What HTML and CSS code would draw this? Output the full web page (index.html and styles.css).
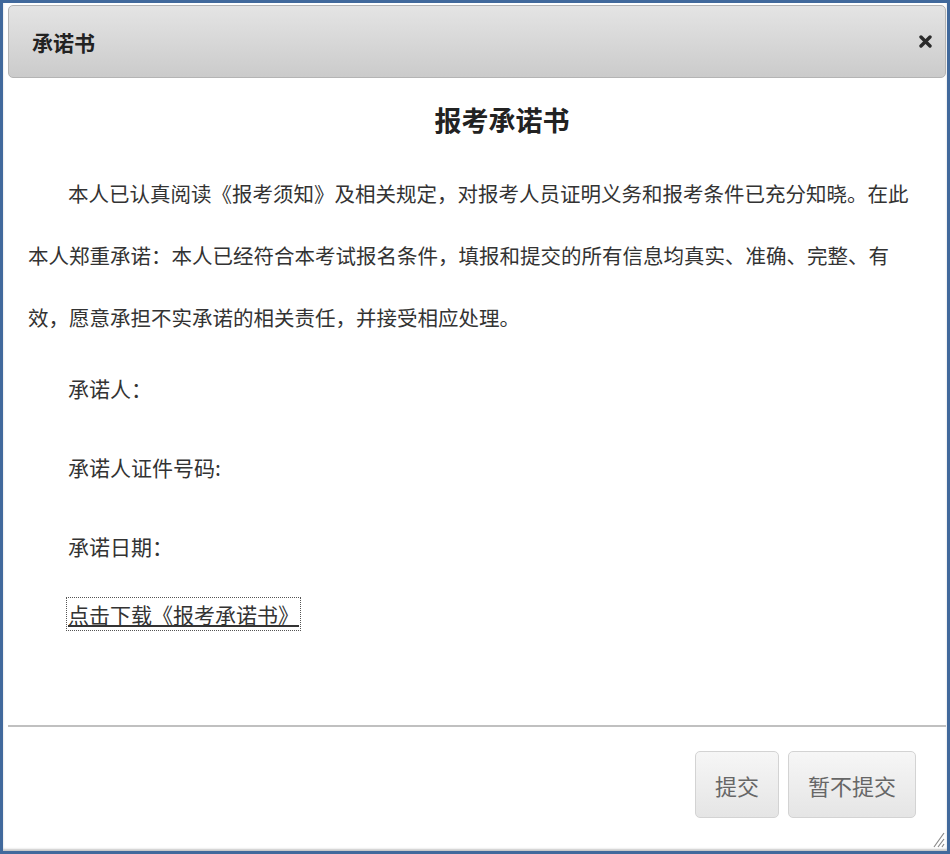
FILE: index.html
```html
<!DOCTYPE html>
<html lang="zh-CN">
<head>
  <meta charset="UTF-8" />
  <title>承诺书</title>
  <link rel="stylesheet" href="styles.css">
</head>
<body>
  <div class="window">
    <div class="titlebar">
      <span class="title">承诺书</span>
      <a class="close" href="#" title="关闭">
        <svg width="13" height="13" viewBox="0 0 13 13"><path d="M2 2 L11 11 M11 2 L2 11" stroke="#2b2b2b" stroke-width="3.4" stroke-linecap="round"/></svg>
      </a>
    </div>

    <div class="content">
      <h2>报考承诺书</h2>
      <p class="para">本人已认真阅读《报考须知》及相关规定，对报考人员证明义务和报考条件已充分知晓。在此本人郑重承诺：本人已经符合本考试报名条件，填报和提交的所有信息均真实、准确、完整、有效，愿意承担不实承诺的相关责任，并接受相应处理。</p>
      <p class="item first">承诺人：</p>
      <p class="item">承诺人证件号码:</p>
      <p class="item">承诺日期：</p>
      <p class="item download"><a href="#">点击下载《报考承诺书》</a></p>
    </div>

    <div class="footer">
      <button class="btn">提交</button>
      <button class="btn">暂不提交</button>
      <svg class="grip" width="12" height="18" viewBox="0 0 12 18">
        <path d="M1 17 L11 3 M5 17 L11 9 M9 17 L11 14" stroke="#8a8a8a" stroke-width="1.2"/>
      </svg>
    </div>
  </div>
</body>
</html>
```

FILE: styles.css
```css
* {
  box-sizing: border-box;
}
body {
  margin: 0;
  font-family: "Noto Sans CJK SC", "Liberation Sans", sans-serif;
  color: #333;
  background: #fff;
}
.window {
  width: 950px;
  height: 854px;
  border: 3px solid #41699c;
  background: #fff;
  display: flex;
  flex-direction: column;
  position: relative;
  box-shadow: inset 0 -2px 2px #c8c8c8;
}
.titlebar {
  height: 73px;
  margin: 2px 1px 0 5px;
  border: 1px solid #b4b4b4;
  border-radius: 5px;
  background: linear-gradient(#e4e4e4, #cbcbcb);
  display: flex;
  align-items: center;
  justify-content: space-between;
  padding: 0 13px 0 23px;
}
.title {
  font-size: 21px;
  font-weight: bold;
  color: #222;
}
.close {
  display: flex;
}
.content {
  flex: 1;
  padding: 0 29px 0 25px;
}
h2 {
  margin: 22px 0 22px;
  text-align: center;
  font-size: 27px;
  line-height: 40px;
  font-weight: bold;
  color: #222;
  padding-left: 58px;
}
.para {
  margin: 0;
  font-size: 20.5px;
  line-height: 62px;
  text-indent: 40px;
}
.item {
  margin: 39px 0 0 40px;
  font-size: 21px;
  line-height: 40px;
}
.item.first {
  margin-top: 20px;
}
.item.download {
  margin-top: 30px;
  line-height: 36px;
}
.download a {
  color: #333;
  text-decoration: underline;
  outline: 1px dotted #555;
  outline-offset: 1px;
}
.footer {
  height: 126px;
  margin: 0 1px 0 5px;
  border-top: 2px solid #c0c0c0;
  display: flex;
  justify-content: flex-end;
  align-items: flex-start;
  gap: 9px;
  padding: 24px 30px 0 0;
  position: relative;
}
.btn {
  height: 67px;
  padding: 0 19px;
  font-family: inherit;
  font-size: 22px;
  color: #666;
  background: linear-gradient(#f6f6f6, #e5e5e5);
  border: 1px solid #d3d3d3;
  border-radius: 5px;
}
.grip {
  position: absolute;
  right: 1px;
  bottom: 3px;
}
```
